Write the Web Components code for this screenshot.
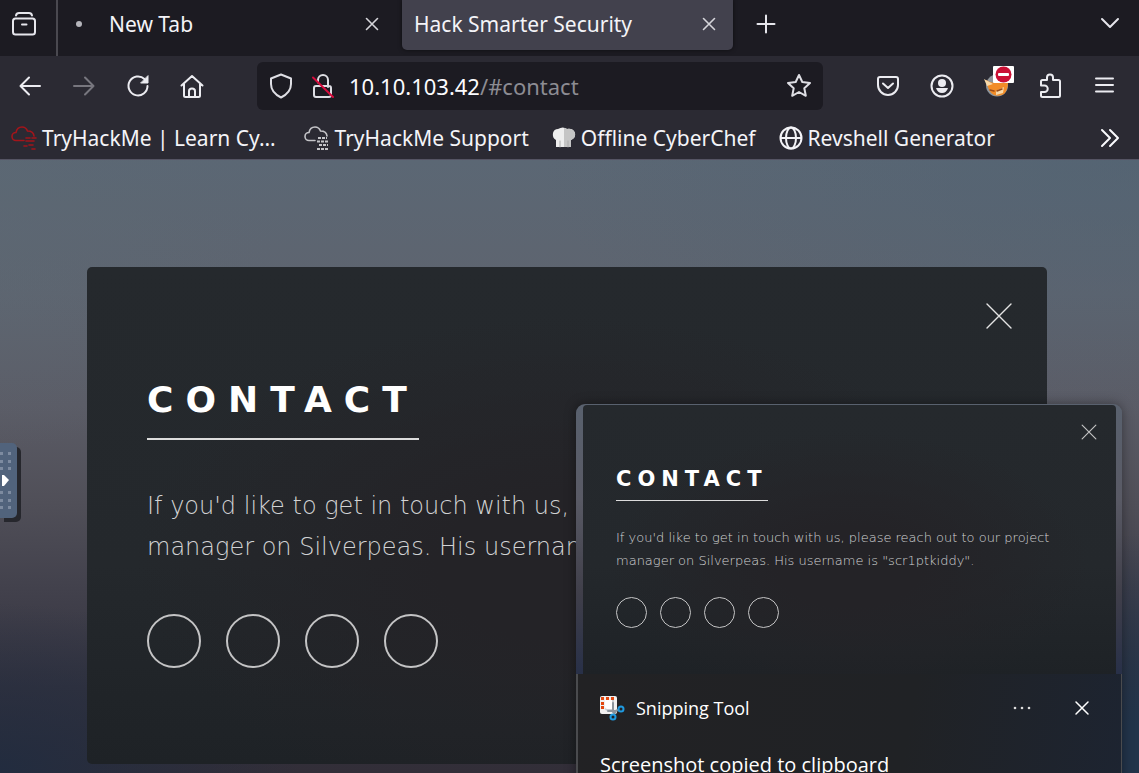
<!DOCTYPE html>
<html lang="en">
<head>
<meta charset="utf-8">
<title>Hack Smarter Security</title>
<style>
html, body { margin: 0; height: 100%; background: #1c1b22; }
body { font-family: "Noto Sans", "Open Sans", sans-serif; color: #fbfbfe; overflow: hidden; }
</style>
</head>
<body>
<browser-window></browser-window>
<script>
const BASE = `<style>
*, *::before, *::after { box-sizing: border-box; }
button { font: inherit; color: inherit; background: none; border: 0; padding: 0; margin: 0; display: grid; place-items: center; }
a { color: inherit; text-decoration: none; }
svg { display: block; fill: none; stroke: currentColor; stroke-width: 2; stroke-linecap: round; stroke-linejoin: round; }
</style>`;
function define(name, html) {
  const template = document.createElement('template');
  template.innerHTML = BASE + html;
  customElements.define(name, class extends HTMLElement {
    constructor() {
      super();
      this.attachShadow({ mode: 'open' }).append(template.content.cloneNode(true));
    }
  });
}

define('browser-tab', `<style>
:host { display: flex; align-items: center; height: 50px; padding: 0 16px 2px 12px; font-size: 21px; border-radius: 0 0 5px 5px; width: 331px; white-space: nowrap; }
:host([active]) { background: #42414d; box-shadow: 0 0 4px #0008; }
:host([loading]) { width: 332px; padding-left: 18px; padding-right: 10px; }
.dot { display: none; width: 6px; height: 6px; border-radius: 3px; background: #b5b5bb; margin-right: 27px; }
:host([loading]) .dot { display: block; }
.title { flex: 1; color: #f4f4f8; }
svg { stroke-width: 1.6; color: #d5d5da; }
</style>
<span class="dot"></span><span class="title"><slot></slot></span>
<button aria-label="Close tab"><svg width="16" height="16" viewBox="0 0 16 16"><path d="M2.5 2.5l11 11M13.500 2.500l-11 11"/></svg></button>`);

define('tab-strip', `<style>
:host { display: flex; align-items: flex-start; height: 56px; background: #1c1b22; color: #e6e6ec; }
.view { width: 58px; height: 56px; border-right: 2px solid #4a4950; padding: 0 9px 8px 0; }
.add { width: 26px; height: 48px; margin-left: 20px; }
.list { margin-left: auto; margin-right: 18px; width: 22px; height: 46px; }
browser-tab + browser-tab { margin-left: 12px; }
</style>
<button class="view" aria-label="Firefox View"><svg width="28" height="28" viewBox="0 0 28 28"><path d="M6 5.500Q6.500 3 9 3h10Q21.500 3 22 5.500"/><rect x="3" y="8.500" width="22" height="16" rx="2.500"/><path d="M12 14.500h4.500"/></svg></button>
<browser-tab loading>New Tab</browser-tab>
<browser-tab active>Hack Smarter Security</browser-tab>
<button class="add" aria-label="New tab"><svg width="20" height="20" viewBox="0 0 20 20"><path d="M10 1.500v17M1.500 10h17"/></svg></button>
<button class="list" aria-label="List all tabs"><svg width="22" height="22" viewBox="0 0 22 22"><path d="M3 7l8 8 8-8"/></svg></button>`);

define('address-bar', `<style>
:host { display: flex; align-items: center; height: 48px; background: #1c1b22; border-radius: 6px; padding: 0 10px; color: #dedee4; min-width: 0; }
a { font-size: 22px; color: #fbfbfe; flex: 1; margin-left: 12px; }
a span { color: #8c8c93; }
button { width: 28px; height: 28px; }
.lock { margin-left: 14px; }
</style>
<button aria-label="Tracking protection"><svg width="26" height="28" viewBox="0 0 26 28"><path d="M13 2.500L23 6.500V12c0 6-4 10.500-10 13.500C7 22.500 3 18 3 12V6.500z"/></svg></button>
<button class="lock" aria-label="Connection not secure"><svg width="26" height="28" viewBox="0 0 26 28"><path d="M8 10.500V8a5 5 0 0 1 10 0v7M6 14h13q2 0 2 2v7q0 2-2 2H6q-2 0-2-2v-7q0-2 2-2z"/><path stroke="#d70c3d" d="M3 5.500l20 19.500"/></svg></button>
<a href="#contact">10.10.103.42<span>/#contact</span></a>
<button aria-label="Bookmark this page"><svg width="28" height="28" viewBox="0 0 28 28"><path d="M14 3l3.300 7 7.700 1-5.700 5.200 1.500 7.600L14 20l-6.800 3.800 1.500-7.600L3 11l7.700-1z"/></svg></button>`);

define('nav-bar', `<style>
:host { display: flex; align-items: center; height: 60px; padding: 0 21px 0 16px; color: #ececf1; }
.nav, .tools { display: flex; }
.nav { gap: 26px; }
.tools { gap: 26px; margin-left: 51px; }
button { width: 28px; height: 28px; }
.off { color: #77767e; }
address-bar { flex: 1; margin-left: 51px; }
</style>
<div class="nav">
<button aria-label="Back"><svg width="28" height="28" viewBox="0 0 28 28"><path d="M24 14H4.500M13 5.500L4.500 14l8.500 8.500"/></svg></button>
<button class="off" aria-label="Forward"><svg width="28" height="28" viewBox="0 0 28 28"><path d="M4 14h19.500M15 5.500l8.500 8.500-8.500 8.500"/></svg></button>
<button aria-label="Reload"><svg width="28" height="28" viewBox="0 0 28 28"><path d="M20.500 7A9.500 9.500 0 1 0 23.500 14"/><path fill="currentColor" stroke-width="1" d="M24 4v7h-7z"/></svg></button>
<button aria-label="Home"><svg width="28" height="28" viewBox="0 0 28 28"><path d="M3.500 13.500L14 4l10.500 9.500M6 12v11.500q0 1.500 1.500 1.500h13q1.500 0 1.500-1.500V12M11 25v-6q0-2.500 3-2.500t3 2.500v6"/></svg></button>
</div>
<address-bar></address-bar>
<div class="tools">
<button aria-label="Save to Pocket"><svg width="28" height="28" viewBox="0 0 28 28"><path d="M6 5h16q2 0 2 2v6a10 10 0 0 1-20 0V7q0-2 2-2zM9 11.500l5 4.500 5-4.500"/></svg></button>
<button aria-label="Account"><svg width="28" height="28" viewBox="0 0 28 28"><circle cx="14" cy="14" r="10.500"/><circle cx="14" cy="11" r="4" fill="currentColor" stroke="none"/><path fill="currentColor" stroke="none" d="M8 16h12q-1.500 5-6 5t-6-5z"/></svg></button>
<button aria-label="FoxyProxy"><svg width="28" height="28" viewBox="0 0 28 28" style="overflow:visible"><g stroke="none"><circle cx="15" cy="13.500" r="11" fill="#8f969c"/><path fill="#f28c28" d="M4 8q6 4 10 2l12 0q0 8-4 12-5 3-10 1-6-3-8-15z"/><path fill="#f9d9a8" d="M2 7l9 5-6 2zM14 19l8-4-1 6-7 2z"/><path d="M8 18l4 1M15 19l5-2" stroke="#9a4b18" stroke-width="1.500"/><rect x="11" y="-6" width="21" height="17" rx="1" fill="#fff"/><circle cx="21.500" cy="2.500" r="8" fill="#cb1035"/><rect x="16" y="1" width="11" height="3" rx="1" fill="#fff"/></g></svg></button>
<button aria-label="Extensions"><svg width="28" height="28" viewBox="0 0 28 28"><path d="M5 11V9.500Q5 8 6.500 8H11V5.500a3 3 0 0 1 6 0V8h5.500Q24 8 24 9.500v14q0 1.500-1.500 1.500h-16Q5 25 5 23.500V20h3.500a2.500 2.500 0 0 0 0-6.500H5z"/></svg></button>
<button aria-label="Menu"><svg width="28" height="28" viewBox="0 0 28 28"><path d="M6 6.500h17M6 13h17M6 19.500h17"/></svg></button>
</div>`);

define('bookmark-link', `<style>
:host { display: block; white-space: nowrap; }
a { display: flex; align-items: center; gap: 5px; font-size: 21px; line-height: 28px; color: #f4f4f8; }
</style>
<a href="#"><slot name="icon"></slot><slot></slot></a>`);

define('bookmark-bar', `<style>
:host { display: flex; align-items: center; height: 44px; padding: 0 18px 0 11px; border-bottom: 1px solid #555463; gap: 23px; }
bookmark-link:first-of-type { margin-right: 5px; }
button { margin-left: auto; }
</style>
<bookmark-link><svg slot="icon" width="26" height="26" viewBox="0 0 26 26" style="color:#a3151b"><path stroke-width="1.600" d="M13 15.500H5a4 4 0 0 1 0-8q1-5.500 6-5.500 4 0 5.500 4 6 0 6.500 5M15 13h4M21 13h4M15 16h8M13 21h3M18 20h4M21 24h3"/></svg>TryHackMe | Learn Cy…</bookmark-link>
<bookmark-link><svg slot="icon" width="26" height="26" viewBox="0 0 26 26" style="color:#c4c4c8"><path stroke-width="1.600" d="M11 15.500H5a4 4 0 0 1 0-8q1-5.500 6-5.500 4 0 5.500 4 6 0 6.500 5"/><path stroke-linecap="butt" stroke-dasharray="3 1" d="M14 13h9M13 16.500h11M15 20h9M13 24h11"/></svg>TryHackMe Support</bookmark-link>
<bookmark-link><svg slot="icon" width="24" height="24" viewBox="0 0 24 24"><g stroke="none"><path fill="#eee" d="M4 21v-7Q0 12 1 7q1-4 5-4 5-3 9 0 6-1 8 4 1 5-4 7v7z"/><path fill="#c5c5c5" d="M12 2q2 0 3 1 6-1 8 4 1 5-4 7v7h-7z"/><path d="M8 15v6M16 15v6" stroke="#aaa" stroke-width="1"/></g></svg>Offline CyberChef</bookmark-link>
<bookmark-link><svg slot="icon" width="24" height="24" viewBox="0 0 24 24"><circle cx="12" cy="12" r="10.500"/><ellipse cx="12" cy="12" rx="5" ry="10.500"/><path d="M2 12h20"/></svg>Revshell Generator</bookmark-link>
<button aria-label="More bookmarks"><svg width="22" height="22" viewBox="0 0 22 22"><path d="M3 3l8 8-8 8M11 3l8 8-8 8"/></svg></button>`);

define('contact-card', `<style>
:host { display: block; position: relative; padding: 105px 60px 96px; border-radius: 5px; background: radial-gradient(ellipse 45% 50% at 50% 60%, #242327 30%, #24232700 100%), linear-gradient(#25292d 0%, #24282c 60%, #1e2226 100%); font-family: "DejaVu Sans", sans-serif; color: #fff;
  --h: 36px; --hl: 56px; --track: 12px; --hp: 10px; --rule: 2px; --t: 24px; --tl: 41px; --gap: 46px; --c: 54px; --cg: 25px; --x: 28px; --xt: 35px; --xr: 34px; }
:host([compact]) { padding: 58px 33px 46px; border-radius: 4px 4px 0 0;
  --h: 21px; --hl: 32px; --track: 6px; --hp: 5px; --rule: 1px; --t: 13px; --tl: 23px; --gap: 25px; --c: 31px; --cg: 13px; --x: 16px; --xt: 19px; --xr: 19px; }
h2 { margin: 0; width: max-content; font-size: var(--h); line-height: var(--hl); letter-spacing: var(--track); font-weight: 700; padding-bottom: var(--hp); border-bottom: var(--rule) solid #dcdcdc; text-transform: uppercase; }
p { margin: var(--gap) 0; font-size: var(--t); line-height: var(--tl); font-weight: 200; color: #d2d3d4; }
ul { display: flex; gap: var(--cg); margin: 0; padding: 0; list-style: none; }
li a { display: block; width: var(--c); height: var(--c); border: var(--rule) solid #c4c4c5; border-radius: 50%; }
button { position: absolute; top: var(--xt); right: var(--xr); }
button svg { width: var(--x); height: var(--x); stroke-width: 1.400; color: #e4e4e4; }
:host([compact]) svg { stroke-width: 2; color: #c4c4c4; }
</style>
<button aria-label="Close"><svg viewBox="0 0 28 28"><path d="M2 2l24 24M26 2L2 26"/></svg></button>
<h2>Contact</h2>
<p><slot></slot></p>
<ul><li><a href="#" aria-label="Twitter"></a></li><li><a href="#" aria-label="Facebook"></a></li><li><a href="#" aria-label="Instagram"></a></li><li><a href="#" aria-label="GitHub"></a></li></ul>`);

define('snip-toast', `<style>
:host { display: block; border-radius: 9px 9px 0 0; overflow: hidden; box-shadow: 0 0 12px #0006; font-family: "Open Sans", "Noto Sans", sans-serif; color: #fff; }
.shot { padding: 1px 6px 0 7px; background: linear-gradient(#59616e, #595a65 35%, #403f4a 70%, #283048); }
.body { border: 2px solid #4a4b4e; border-width: 0 1px 0 2px; background: linear-gradient(100deg, #222224 0%, #202225 60%, #1d2431 100%); padding: 20px 30px 20px 22px; min-height: 130px; }
.head { display: flex; align-items: center; gap: 11px; font-size: 18px; line-height: 28px; }
.head b { font-weight: 400; flex: 1; }
.close { margin-left: 30px; }
p { margin: 28px 0 0; font-size: 20px; line-height: 30px; }
.close svg { stroke-width: 1.500; }
</style>
<div class="shot"><slot></slot></div>
<div class="body">
<div class="head"><svg width="25" height="26" viewBox="0 0 25 26"><g stroke="none"><rect x="0" y="1" width="17" height="18" rx="2" fill="#f1f1f1"/><path fill="#c9cdd2" d="M5 5h9v11H8q-3 0-3-3z"/><path fill="#fff" d="M5 5h7v9H7q-2 0-2-2z"/><g fill="#e2470f"><path d="M1 2h3v3H1zM6 2h3v3H6zM11 2h3v3h-3zM1 7h3v3H1zM1 11h3v3H1z"/></g><path stroke="#8b949c" d="M13 8v9l5-2M8 16h8l-2 3"/></g><g stroke="#1f9ae0" stroke-width="2"><circle cx="21" cy="14" r="2.500"/><circle cx="13" cy="22" r="2.500"/></g></svg>
<b>Snipping Tool</b>
<button aria-label="More options"><svg width="20" height="20" viewBox="0 0 20 20"><g fill="#ddd" stroke="none"><circle cx="3" cy="10" r="1.300"/><circle cx="10" cy="10" r="1.300"/><circle cx="17" cy="10" r="1.300"/></g></svg></button>
<button class="close" aria-label="Dismiss"><svg width="18" height="18" viewBox="0 0 18 18"><path d="M3 3l12 12M15 3L3 15"/></svg></button></div>
<p>Screenshot copied to clipboard</p>
</div>`);

define('side-handle', `<style>
:host { display: block; }
button { width: 17px; height: 75px; border-radius: 0 5px 5px 0; background: #51637c; box-shadow: 4px 4px 0 #26272d; }
svg { width: 17px; height: 75px; }
</style>
<button aria-label="Open control bar"><svg viewBox="0 0 17 75"><g stroke="none"><path fill="#7d8ba0" d="M0 9h3v3H0zM8 9h3v3H8zM0 17h3v3H0zM8 17h3v3H8zM0 24h3v3H0zM8 24h3v3H8zM0 48h3v3H0zM8 48h3v3H8zM0 56h3v3H0zM8 56h3v3H8zM0 63h3v3H0zM8 63h3v3H8z"/><path fill="#fff" d="M2 32h2l5 5-5 6H2z"/></g></svg></button>`);

define('page-view', `<style>
:host { display: block; position: relative; overflow: hidden; padding: 107px 92px 9px 87px;
  background:
    radial-gradient(ellipse 600px 260px at 100% 0%, #50627299 0%, #50627200 100%),
    radial-gradient(ellipse 280px 240px at 0% 8%, #5c687399 0%, #5c687300 100%),
    radial-gradient(ellipse 300px 170px at 0% 100%, #222c3f 0%, #222c3f00 100%),
    radial-gradient(ellipse 160px 240px at 100% 100%, #22344a 20%, #22344a00 100%),
    linear-gradient(#5b6774 0%, #5e646f 22%, #5b5c66 40%, #504f58 56%, #42414c 70%, #34333f 86%, #322e38 100%); }
side-handle { position: absolute; left: 0; top: 283px; }
snip-toast { position: absolute; right: 17px; top: 244px; width: 546px; }
</style>
<contact-card>If you'd like to get in touch with us,<br>manager on Silverpeas. His usernam</contact-card>
<side-handle></side-handle>
<snip-toast><contact-card compact>If you'd like to get in touch with us, please reach out to our project manager on Silverpeas. His username is "scr1ptkiddy".</contact-card></snip-toast>`);

define('browser-window', `<style>
:host { display: flex; flex-direction: column; height: 100vh; background: #2b2a33; }
page-view { flex: 1; }
</style>
<tab-strip></tab-strip><nav-bar></nav-bar><bookmark-bar></bookmark-bar><page-view></page-view>`);
</script>
</body>
</html>
